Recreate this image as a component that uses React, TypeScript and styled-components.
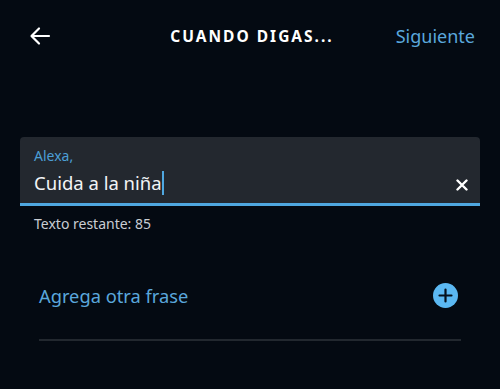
import React from "react";
import styled, { createGlobalStyle } from "styled-components";

const GlobalStyle = createGlobalStyle`
  html, body {
    margin: 0;
    padding: 0;
    background: #040a12;
  }
  * {
    box-sizing: border-box;
  }
`;

function App() {
  return (
    <>
      <GlobalStyle />
      <Screen>
        <Header>
          <BackButton aria-label="Atrás">
            <svg width="22" height="22" viewBox="0 0 22 22" fill="none">
              <path
                d="M20 11H3M10 3.5L2.5 11L10 18.5"
                stroke="#ffffff"
                strokeWidth="2.2"
                strokeLinecap="round"
                strokeLinejoin="round"
              />
            </svg>
          </BackButton>
          <Title>CUANDO DIGAS...</Title>
          <NextLink>Siguiente</NextLink>
        </Header>

        <Field>
          <FieldLabel>Alexa,</FieldLabel>
          <FieldRow>
            <FieldValue>
              Cuida a la niña<Caret />
            </FieldValue>
            <ClearButton aria-label="Borrar">
              <svg width="12" height="12" viewBox="0 0 12 12">
                <path
                  d="M1.5 1.5L10.5 10.5M10.5 1.5L1.5 10.5"
                  stroke="#ffffff"
                  strokeWidth="2.4"
                  strokeLinecap="round"
                />
              </svg>
            </ClearButton>
          </FieldRow>
        </Field>
        <Helper>Texto restante: 85</Helper>

        <AddRow>
          <AddText>Agrega otra frase</AddText>
          <svg width="25" height="25" viewBox="0 0 25 25">
            <circle cx="12.5" cy="12.5" r="12.5" fill="#5bb8f2" />
            <path
              d="M12.5 6.5V18.5M6.5 12.5H18.5"
              stroke="#05101c"
              strokeWidth="2.2"
              strokeLinecap="round"
            />
          </svg>
        </AddRow>
        <Divider />
      </Screen>
    </>
  );
}

const Screen = styled.div`
  width: 500px;
  height: 389px;
  background: #040a12;
  font-family: "Noto Sans", "Open Sans", sans-serif;
  display: flex;
  flex-direction: column;
  padding: 0 20px;
`;

const Header = styled.div`
  height: 72px;
  display: grid;
  grid-template-columns: 1fr auto 1fr;
  align-items: center;
  padding: 0 5px 0 9px;
`;

const BackButton = styled.button`
  background: transparent;
  border: 0;
  padding: 0;
  display: flex;
  justify-self: start;
  cursor: pointer;
`;

const Title = styled.div`
  color: #ffffff;
  font-size: 15.5px;
  font-weight: 700;
  letter-spacing: 2px;
`;

const NextLink = styled.div`
  color: #5aa7dc;
  font-size: 18px;
  justify-self: end;
`;

const Field = styled.div`
  margin-top: 65px;
  background: #23282f;
  border-radius: 4px 4px 0 0;
  border-bottom: 3px solid #4fa7e0;
  padding: 9px 12px 3px 14px;
  display: flex;
  flex-direction: column;
`;

const FieldLabel = styled.div`
  color: #4c9fd6;
  font-size: 14px;
  line-height: 19px;
`;

const FieldRow = styled.div`
  display: flex;
  align-items: center;
  justify-content: space-between;
  height: 35px;
`;

const FieldValue = styled.div`
  color: #f2f4f6;
  font-size: 18.5px;
  display: flex;
  align-items: center;
`;

const Caret = styled.span`
  display: inline-block;
  width: 2px;
  height: 24px;
  background: #4fa7e0;
  margin-left: 0;
`;

const ClearButton = styled.button`
  background: transparent;
  border: 0;
  padding: 0;
  display: flex;
  margin-top: 4px;
`;

const Helper = styled.div`
  color: #c9cdd2;
  font-size: 14px;
  padding: 8px 14px 0 14px;
`;

const AddRow = styled.div`
  margin-top: 50px;
  display: flex;
  align-items: center;
  justify-content: space-between;
  padding: 0 22px 0 19px;
`;

const AddText = styled.div`
  color: #5aa7dc;
  font-size: 18.3px;
`;

const Divider = styled.div`
  margin: 31px 19px 0 19px;
  height: 2px;
  background: #22282f;
`;

export default App;
